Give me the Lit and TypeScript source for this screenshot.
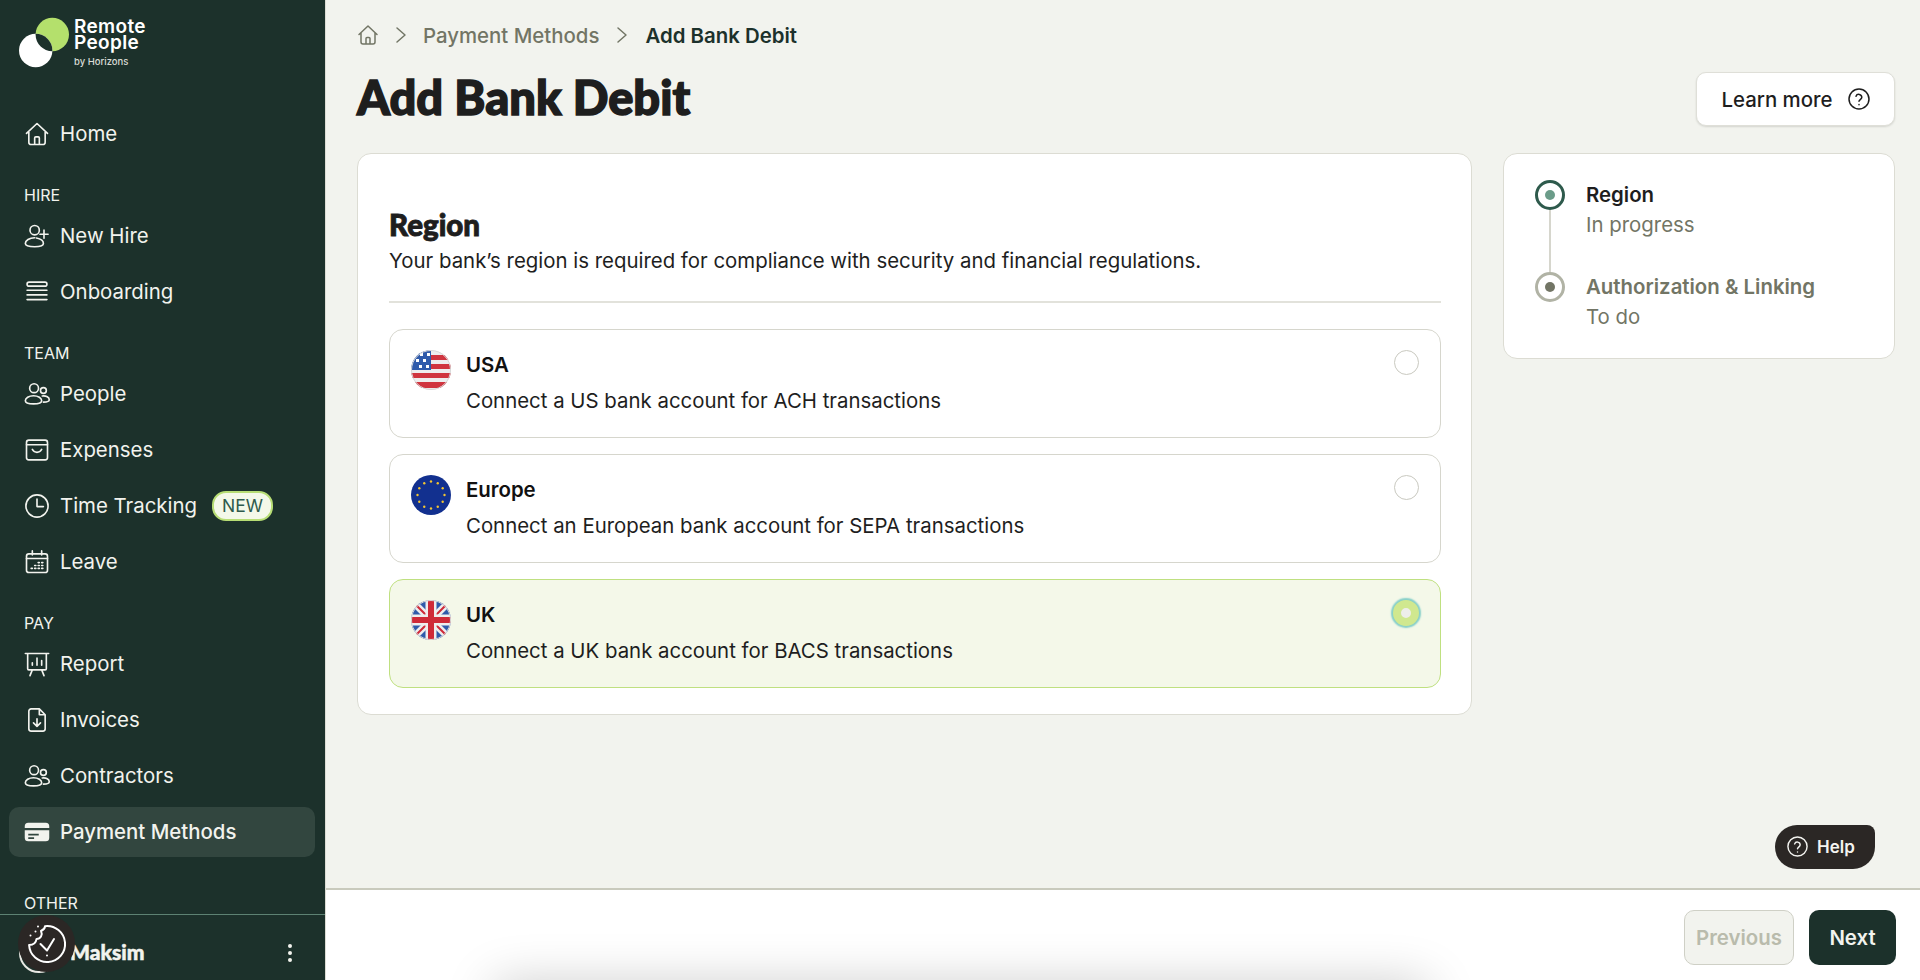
import { LitElement, html, css, svg } from "lit";
import { customElement } from "lit/decorators.js";

const icons: Record<string, unknown> = {
  home: svg`<path d="M3 11.500 12 3l9 8.500M5 9.700V19a2 2 0 0 0 2 2h10a2 2 0 0 0 2-2V9.700M10 21v-5.500a1 1 0 0 1 1-1h2a1 1 0 0 1 1 1V21"/>`,
  hire: svg`<circle cx="10" cy="7" r="4"/><path d="M10 13.500c-4.500 0-8 2.300-8 5 0 1.700 3 2.700 8 2.700s7.500-1 7.500-2.700c0-2.200-2.500-4.200-6-4.800M18 7v7M14.500 10.500h7"/>`,
  stack: svg`<rect x="3.500" y="3.500" width="17" height="3.500" rx="1.700"/><path d="M3.500 10.500h17M3.500 14.500h17M3.500 18.500h17"/>`,
  people: svg`<circle cx="9.500" cy="7" r="3.800"/><circle cx="17.500" cy="9" r="2.500"/><path d="M9 13.500c-4 0-7 2-7 4.300 0 1.700 3 2.700 7 2.700s7-1 7-2.700c0-2.300-3-4.300-7-4.300ZM16.500 13.700c3.500-.4 6 1.200 6 3.300 0 1.300-2 2-5 2"/>`,
  expense: svg`<rect x="3" y="3.500" width="18" height="17" rx="2"/><path d="M3 7.500h18M8 11.500c1 1.700 2.500 2.500 4 2.500s3-.8 4-2.500"/>`,
  clock: svg`<circle cx="12" cy="12" r="9.500"/><path d="M12 6v6.500h5.500"/>`,
  leave: svg`<rect x="3" y="5" width="18" height="16" rx="2"/><path d="M3 9h18M8 2.500V6M16 2.500V6M7 17.500h1M10 17.500h1M13 17.500h1M16 17.500h1M10 15h1M13 15h1M16 15h1M13 12.500h1M16 12.500h1"/>`,
  report: svg`<path d="M2 3h20M4 3v13a1 1 0 0 0 1 1h14a1 1 0 0 0 1-1V3M8 17l-2 5M16 17l2 5M8 13v-2M12 13V7M16 13V9"/>`,
  invoice: svg`<path d="M14 2.500H7a2 2 0 0 0-2 2v15a2 2 0 0 0 2 2h10a2 2 0 0 0 2-2V7.500L14 2.500ZM14 2.500v5h5M12 11v6.500M9 14.500l3 3 3-3"/>`,
};

const cardIcon = svg`<path fill="currentColor" stroke="none" d="M4.500 4h15a3 3 0 0 1 3 3v1.500h-21V7a3 3 0 0 1 3-3ZM1.500 10.500h21V17a3 3 0 0 1-3 3h-15a3 3 0 0 1-3-3v-6.500Zm3 3v1.500h9v-1.500h-9Zm0 3V18h5v-1.500h-5Z"/>`;

type NavRow = { label?: string; section?: string; icon?: string; active?: boolean; badge?: string; other?: boolean };

const nav: NavRow[] = [
  { label: "Home", icon: "home" },
  { section: "HIRE" },
  { label: "New Hire", icon: "hire" },
  { label: "Onboarding", icon: "stack" },
  { section: "TEAM" },
  { label: "People", icon: "people" },
  { label: "Expenses", icon: "expense" },
  { label: "Time Tracking", icon: "clock", badge: "NEW" },
  { label: "Leave", icon: "leave" },
  { section: "PAY" },
  { label: "Report", icon: "report" },
  { label: "Invoices", icon: "invoice" },
  { label: "Contractors", icon: "people" },
  { label: "Payment Methods", icon: "card", active: true },
  { section: "OTHER", other: true },
];

const euStars = Array.from({ length: 12 }, (_, i) => {
  const a = (i * Math.PI) / 6;
  return { x: 20 + 13.5 * Math.sin(a), y: 20 - 13.5 * Math.cos(a) };
});

const usFlag = html`<svg class="flag" viewBox="0 0 40 40">
  <defs><clipPath id="us"><circle cx="20" cy="20" r="20" /></clipPath></defs>
  <g clip-path="url(#us)">
    <rect width="40" height="40" fill="#eeeeee" />
    <path d="M18 5h22v5H18zM18 14h22v5H18zM0 23h40v5H0zM0 32h40v6H0z" fill="#d0353f" />
    <rect width="20" height="20" fill="#2f5bab" />
    <path d="M9 3h3v3H9zM16 3h3v3h-3zM5 9h3v3H5zM12 9h3v3h-3zM8 15h3v3H8zM15 15h3v3h-3z" fill="#fff" />
  </g>
  <circle cx="20" cy="20" r="19.500" fill="none" stroke="#d9d9d9" />
</svg>`;

const euFlag = html`<svg class="flag" viewBox="0 0 40 40">
  <circle cx="20" cy="20" r="20" fill="#12308f" />
  ${euStars.map((s) => svg`<circle cx=${s.x} cy=${s.y} r="1.200" fill="#f3c530" />`)}
</svg>`;

const ukFlag = html`<svg class="flag" viewBox="0 0 40 40">
  <defs><clipPath id="uk"><circle cx="20" cy="20" r="20" /></clipPath></defs>
  <g clip-path="url(#uk)">
    <rect width="40" height="40" fill="#2f5bab" />
    <path d="M0 0 40 40M40 0 0 40" stroke="#eee" stroke-width="7" />
    <path d="M2 2 16 16M38 2 24 16M2 38 16 24M38 38 24 24" stroke="#cf2a38" stroke-width="2" />
    <path d="M20 0v40M0 20h40" stroke="#eee" stroke-width="11" />
    <path d="M20 0v40M0 20h40" stroke="#cf2a38" stroke-width="6" />
  </g>
  <circle cx="20" cy="20" r="19.500" fill="none" stroke="#d9d9d9" />
</svg>`;

const regions = [
  { name: "USA", text: "Connect a US bank account for ACH transactions", flag: usFlag },
  { name: "Europe", text: "Connect an European bank account for SEPA transactions", flag: euFlag },
  { name: "UK", text: "Connect a UK bank account for BACS transactions", flag: ukFlag, selected: true },
];

@customElement("app-root")
export class AppRoot extends LitElement {
  static styles = css`
    :host {
      display: flex;
      height: 980px;
      overflow: hidden;
      position: relative;
      background: #f2f3ee;
      color: #1e1e1e;
      font-family: Inter, "Liberation Sans", sans-serif;
      font-size: 20.4px;
    }

    /* sidebar */
    .side {
      width: 325px;
      flex: none;
      display: flex;
      flex-direction: column;
      background: #1c312b;
      color: #f2f3ee;
      border-right: 1px solid #dcdcd4;
    }
    .logo {
      height: 109px;
      flex: none;
      box-sizing: border-box;
      padding: 17px 0 0 19px;
      display: flex;
      gap: 4px;
    }
    .logo svg {
      width: 51px;
      height: 51px;
    }
    .logo-text {
      font-weight: 600;
      font-size: 19px;
      line-height: 16px;
      color: #fff;
      padding-top: 2px;
      letter-spacing: 0.35px;
    }
    .logo-text small {
      display: block;
      font-size: 9.500px;
      font-weight: 500;
      margin-top: 5px;
      line-height: 12px;
      letter-spacing: 0;
      color: #d8dbd5;
    }
    nav {
      flex: 1;
      padding: 0 10px 0 9px;
      overflow: hidden;
    }
    .item {
      height: 50px;
      margin-bottom: 6px;
      padding-left: 16px;
      display: flex;
      align-items: center;
      border-radius: 10px;
      line-height: 26px;
    }
    .item svg {
      width: 28px;
      height: 28px;
      margin: 0 9px 0 -2px;
      fill: none;
      stroke: currentColor;
      stroke-width: 1.400;
      stroke-linecap: round;
      stroke-linejoin: round;
      flex: none;
    }
    .item.active {
      background: #32463f;
      font-weight: 500;
    }
    .badge {
      margin-left: 15px;
      padding: 0 8px;
      display: flex;
      align-items: center;
      background: #f4f8e9;
      color: #2e5a4c;
      border: 2px solid #b7dd75;
      border-radius: 14px;
      font-size: 17.500px;
      height: 26px;
    }
    .section {
      margin: 26px 0 6px 15px;
      font-size: 16px;
      line-height: 20px;
    }
    .section.other {
      margin-top: 36px;
      margin-bottom: 0;
    }
    .user {
      height: 66px;
      flex: none;
      border-top: 1px solid #5d8273;
      display: flex;
      align-items: center;
      padding: 11px 33px 0 19px;
      box-sizing: border-box;
    }
    .avatar {
      width: 40px;
      height: 40px;
      box-sizing: border-box;
      border-radius: 50%;
      border: 2px solid #e8e8e3;
      margin-right: 11px;
      flex: none;
    }
    .user b {
      flex: 1;
      padding-bottom: 3px;
      font-family: Lato, Inter, sans-serif;
      font-weight: 900;
      font-size: 21px;
      -webkit-text-stroke: 0.5px currentColor;
    }
    .dots {
      display: flex;
      flex-direction: column;
      gap: 3px;
    }
    .dots i {
      width: 4px;
      height: 4px;
      border-radius: 50%;
      background: #f2f3ee;
    }
    .cookie {
      position: absolute;
      left: 18px;
      top: 915px;
      width: 57px;
      height: 57px;
      border-radius: 50%;
      background: #2b2725;
      display: flex;
      align-items: center;
      justify-content: center;
    }
    .cookie svg {
      width: 40px;
      height: 40px;
      fill: none;
      stroke: #fff;
      stroke-width: 2;
      stroke-linecap: round;
      stroke-linejoin: round;
    }

    /* main column */
    .main {
      flex: 1;
      min-width: 0;
      display: flex;
      flex-direction: column;
    }
    .content {
      flex: 1;
      padding: 22px 25px 0 31px;
    }
    .crumbs {
      display: flex;
      align-items: center;
      height: 26px;
      margin-bottom: 24px;
      font-weight: 500;
      color: #727565;
    }
    .crumbs svg {
      fill: none;
      stroke: currentColor;
      stroke-width: 1.500;
      stroke-linecap: round;
      stroke-linejoin: round;
    }
    .crumbs .home {
      width: 24px;
      height: 24px;
      margin: 0 14px 0 -1px;
    }
    .crumbs .chev {
      width: 14px;
      height: 20px;
    }
    .crumbs .chev.first {
      margin-right: 15px;
    }
    .crumbs .chev.second {
      margin: 0 16px;
    }
    .crumbs .current {
      color: #1c312b;
      font-weight: 600;
    }
    .head {
      display: flex;
      align-items: center;
      justify-content: space-between;
      height: 54px;
      margin-bottom: 27px;
    }
    h1 {
      margin: 0 0 4px;
      font-family: Lato, Inter, sans-serif;
      font-weight: 900;
      font-size: 47px;
      line-height: 50px;
      color: #1e1e1e;
      -webkit-text-stroke: 1.500px currentColor;
    }
    .learn {
      box-sizing: border-box;
      width: 199px;
      height: 54px;
      display: flex;
      align-items: center;
      justify-content: center;
      gap: 14px;
      padding-left: 1px;
      border: 1px solid #dfdfd8;
      border-radius: 10px;
      background: #fff;
      box-shadow: 0 1px 2px rgba(30, 30, 20, 0.14);
      font-weight: 500;
    }
    .learn svg,
    .help svg {
      fill: none;
      stroke: currentColor;
      stroke-width: 1.500;
      stroke-linecap: round;
      stroke-linejoin: round;
    }
    .learn svg {
      width: 24px;
      height: 24px;
    }
    .cols {
      display: grid;
      grid-template-columns: 1115px 392px;
      gap: 31px;
      align-items: start;
    }
    .card {
      box-sizing: border-box;
      background: #fff;
      border: 1px solid #dcdcd3;
      border-radius: 14px;
    }
    .form {
      padding: 54px 30px 26px 31px;
    }
    h2 {
      margin: 0;
      font-family: Lato, Inter, sans-serif;
      font-weight: 900;
      font-size: 29.500px;
      line-height: 34px;
      -webkit-text-stroke: 0.900px currentColor;
    }
    .desc {
      line-height: 28px;
      margin: 5px 0 26px;
    }
    hr {
      border: none;
      border-top: 2px solid #e2e2db;
      margin: 0 0 26px;
    }
    .options {
      display: flex;
      flex-direction: column;
      gap: 16px;
    }
    .option {
      box-sizing: border-box;
      height: 109px;
      display: flex;
      padding: 20px 21px;
      border: 1px solid #d6d6cd;
      border-radius: 14px;
    }
    .option.on {
      background: #f4f8e9;
      border-color: #bfe080;
    }
    .flag {
      width: 40px;
      height: 40px;
      flex: none;
      margin-right: 15px;
    }
    .option .copy {
      flex: 1;
      padding-top: 1px;
    }
    .option b {
      display: block;
      font-weight: 600;
      line-height: 28px;
      color: #111;
      margin-bottom: 8px;
    }
    .option span {
      line-height: 28px;
    }
    .radio {
      box-sizing: border-box;
      width: 25px;
      height: 25px;
      border: 1px solid #c9c9c0;
      border-radius: 50%;
      background: #fff;
    }
    .option.on .radio {
      width: 26px;
      height: 26px;
      border: 8px solid #d0e88f;
      background: #eeeeea;
      box-shadow: 0 0 1.500px 2px #86cfc8;
    }
    .steps {
      padding: 26px 30px 26px 31px;
    }
    .step {
      display: flex;
      gap: 21px;
    }
    .marker {
      width: 30px;
      flex: none;
      display: flex;
      flex-direction: column;
      align-items: center;
    }
    .dot {
      box-sizing: border-box;
      width: 30px;
      height: 30px;
      flex: none;
      display: flex;
      align-items: center;
      justify-content: center;
      border-radius: 50%;
      border: 3px solid #2e5a4c;
    }
    .dot i {
      width: 10px;
      height: 10px;
      border-radius: 50%;
      background: #6b9c89;
    }
    .todo .dot {
      border-color: #b1b3a5;
    }
    .todo .dot i {
      background: #727565;
    }
    .line {
      flex: 1;
      width: 2px;
      background: #d6d6cd;
    }
    .step-text {
      line-height: 30px;
      color: #727565;
      padding-bottom: 32px;
    }
    .step:last-child .step-text {
      padding-bottom: 0;
    }
    .step-text b {
      display: block;
      font-weight: 600;
      color: #1e1e1e;
    }
    .todo .step-text b {
      color: #727565;
    }

    /* footer */
    .foot {
      box-sizing: border-box;
      height: 92px;
      flex: none;
      position: relative;
      overflow: hidden;
      background: #fff;
      border-top: 2px solid #c9cabd;
      display: flex;
      justify-content: flex-end;
      align-items: flex-start;
      gap: 15px;
      padding: 20px 24px 0 0;
    }
    .foot button {
      font: inherit;
      font-weight: 600;
      height: 55px;
      border-radius: 10px;
      box-sizing: border-box;
    }
    .prev {
      width: 110px;
      background: #f2f3ee;
      color: #b9bbac;
      border: 1px solid #cfd0c6;
    }
    .next {
      width: 87px;
      background: #1c312b;
      color: #f2f3ee;
      border: none;
    }
    .glow {
      position: absolute;
      left: 175px;
      top: 100px;
      width: 920px;
      height: 30px;
      box-shadow: 0 0 50px 6px rgba(0, 0, 0, 0.22);
    }
    .help {
      position: absolute;
      left: 1775px;
      top: 825px;
      width: 100px;
      height: 44px;
      box-sizing: border-box;
      padding: 0 0 1px 11px;
      display: flex;
      align-items: center;
      gap: 8px;
      background: #2b2725;
      color: #f4f4f0;
      border-radius: 22px 8px 22px 22px;
      font-size: 17px;
      font-weight: 600;
    }
    .help svg {
      width: 23px;
      height: 23px;
    }
  `;

  private renderNavRow(row: NavRow) {
    if (row.section) {
      return html`<div class="section ${row.other ? "other" : ""}">${row.section}</div>`;
    }
    return html`<div class="item ${row.active ? "active" : ""}">
      <svg viewBox="0 0 24 24">${row.icon === "card" ? cardIcon : icons[row.icon!]}</svg>
      ${row.label} ${row.badge ? html`<span class="badge">${row.badge}</span>` : null}
    </div>`;
  }

  render() {
    return html`
      <aside class="side">
        <div class="logo">
          <svg viewBox="0 0 51 51">
            <defs><clipPath id="lens"><circle cx="33.300" cy="17.500" r="16.700" /></clipPath></defs>
            <circle cx="33.300" cy="17.500" r="16.700" fill="#b4e06c" />
            <circle cx="16.700" cy="33.500" r="16.700" fill="#fff" />
            <circle cx="16.700" cy="33.500" r="16.700" fill="#1c312b" clip-path="url(#lens)" />
          </svg>
          <div class="logo-text">Remote<br />People<small>by Horizons</small></div>
        </div>
        <nav>${nav.map((row) => this.renderNavRow(row))}</nav>
        <div class="user">
          <div class="avatar"></div>
          <b>Maksim</b>
          <div class="dots"><i></i><i></i><i></i></div>
        </div>
      </aside>

      <div class="main">
        <div class="content">
          <div class="crumbs">
            <svg class="home" viewBox="0 0 24 24">${icons.home}</svg>
            <svg class="chev first" viewBox="0 0 14 20"><path d="M3 3l8 7-8 7" /></svg>
            <span>Payment Methods</span>
            <svg class="chev second" viewBox="0 0 14 20"><path d="M3 3l8 7-8 7" /></svg>
            <span class="current">Add Bank Debit</span>
          </div>
          <div class="head">
            <h1>Add Bank Debit</h1>
            <div class="learn">
              Learn more
              <svg viewBox="0 0 24 24">
                <circle cx="12" cy="12" r="10" />
                <path d="M9 9.300a3 3 0 0 1 5.800 1c0 2-2.800 2.500-2.800 4M12 17.600v.1" />
              </svg>
            </div>
          </div>
          <div class="cols">
            <section class="card form">
              <h2>Region</h2>
              <div class="desc">Your bank’s region is required for compliance with security and financial regulations.</div>
              <hr />
              <div class="options">
                ${regions.map(
                  (r) => html`<div class="option ${r.selected ? "on" : ""}">
                    ${r.flag}
                    <div class="copy"><b>${r.name}</b><span>${r.text}</span></div>
                    <div class="radio"></div>
                  </div>`
                )}
              </div>
            </section>
            <section class="card steps">
              <div class="step">
                <div class="marker"><div class="dot"><i></i></div><div class="line"></div></div>
                <div class="step-text"><b>Region</b>In progress</div>
              </div>
              <div class="step todo">
                <div class="marker"><div class="dot"><i></i></div></div>
                <div class="step-text"><b>Authorization &amp; Linking</b>To do</div>
              </div>
            </section>
          </div>
        </div>
        <footer class="foot">
          <div class="glow"></div>
          <button class="prev">Previous</button>
          <button class="next">Next</button>
        </footer>
      </div>

      <div class="cookie">
        <svg viewBox="0 0 40 40">
          <path d="M18 2.200A18 18 0 1 1 2.100 21C6 21 9 19 9.500 15 13.500 15 16 11 14 7 16 6 18 4 18 2.200Z" />
          <path d="M13.500 20l6.500 6.500L27 15M20 31.500v.1" />
          <path d="M11 2.500v.1M8.500 7.500v.1M3.500 11.500v.1" />
        </svg>
      </div>
      <div class="help">
        <svg viewBox="0 0 24 24">
          <circle cx="12" cy="12" r="10" />
          <path d="M9 9.300a3 3 0 0 1 5.800 1c0 2-2.800 2.500-2.800 4M12 17.600v.1" />
        </svg>
        Help
      </div>
    `;
  }
}
